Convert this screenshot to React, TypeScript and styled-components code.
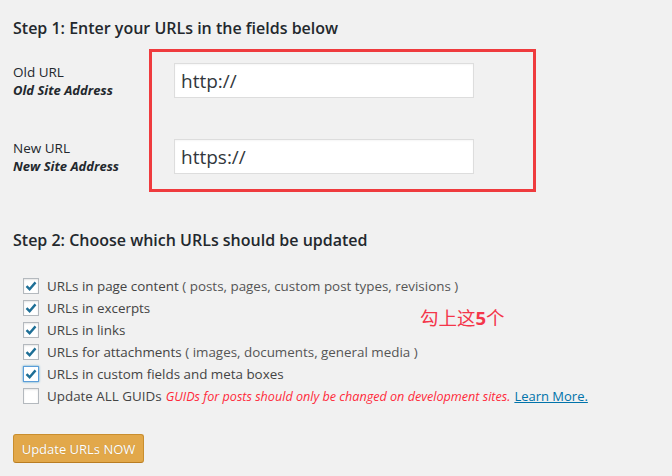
import styled, { createGlobalStyle } from "styled-components";

const GlobalStyle = createGlobalStyle`
  html, body {
    margin: 0;
    padding: 0;
    background: #f1f1f1;
  }
  body {
    font-family: "Open Sans", "Noto Sans", Arial, sans-serif;
    font-size: 13px;
    color: #444;
  }
`;

const Page = styled.div`
  position: relative;
  padding: 16px 13px 0 13px;
  width: 672px;
  height: 476px;
  box-sizing: border-box;
`;

const Heading = styled.h3`
  margin: 0;
  font-size: 16px;
  font-weight: 600;
  color: #23282d;
  line-height: 24px;
`;

const Fields = styled.div`
  display: flex;
  margin-top: 9px;
`;

const LabelColumn = styled.div`
  width: 136px;
  display: flex;
  flex-direction: column;
  gap: 41px;
  padding-top: 14px;
`;

const FieldLabel = styled.div`
  height: 35px;
  line-height: 18px;
  font-size: 13.5px;
  color: #23282d;
  strong {
    display: block;
    font-size: 13px;
    font-style: italic;
    font-weight: 700;
  }
`;

const Frame = styled.div`
  width: 387px;
  box-sizing: border-box;
  border: 3px solid #ef3b3e;
  padding: 11px 22px 15px;
  display: flex;
  flex-direction: column;
  gap: 41px;
`;

const UrlInput = styled.input`
  width: 300px;
  height: 35px;
  box-sizing: border-box;
  border: 1px solid #ddd;
  background: #fff;
  padding: 0 6px;
  font-family: inherit;
  font-size: 19px;
  color: #32373c;
  outline: none;
  box-shadow: inset 0 1px 2px rgba(0, 0, 0, 0.04);
`;

const Step2 = styled(Heading)`
  margin-top: 36px;
`;

const OptionList = styled.div`
  margin-top: 23px;
  padding-left: 10px;
  display: flex;
  flex-direction: column;
`;

const Option = styled.label`
  display: flex;
  align-items: center;
  height: 22px;
  gap: 8px;
  font-size: 13.4px;
  color: #444;
  white-space: nowrap;
`;

const Box = styled.span<{ $focus?: boolean }>`
  width: 16px;
  height: 16px;
  box-sizing: border-box;
  background: #fff;
  border: 1px solid ${(p) => (p.$focus ? "#5b9dd9" : "#b4b9be")};
  box-shadow: ${(p) =>
    p.$focus ? "0 0 2px rgba(30,140,190,0.8)" : "inset 0 1px 2px rgba(0,0,0,0.1)"};
  display: flex;
  align-items: center;
  justify-content: center;
  flex-shrink: 0;
`;

const Note = styled.span`
  color: #555;
`;

const Warning = styled.em`
  color: #ff2a3a;
  margin-left: 4px;
  font-size: 12.6px;
`;

const MoreLink = styled.a`
  color: #0073aa;
  text-decoration: underline;
  margin-left: 4px;
  font-size: 13px;
`;

const Annotation = styled.div`
  position: absolute;
  left: 420px;
  top: 304px;
  font-family: "Noto Sans CJK SC", "Noto Sans", sans-serif;
  font-size: 18.5px;
  color: #f4364a;
  b {
    font-family: "Open Sans", sans-serif;
    font-weight: 700;
  }
`;

const SubmitButton = styled.button`
  margin-top: 27px;
  width: 131px;
  height: 29px;
  box-sizing: border-box;
  background: #e2a84a;
  border: 1px solid #c98e2e;
  border-bottom-color: #b97d22;
  border-radius: 3px;
  color: #fff;
  font-family: inherit;
  font-size: 13px;
  text-shadow: 0 0 1px rgba(0, 0, 0, 0.2);
  padding: 0;
  cursor: pointer;
`;

function Check() {
  return (
    <svg width="14" height="14" viewBox="0 0 14 14">
      <path d="M2.5 7.2 L5.6 10.2 L11.5 3.4" fill="none" stroke="#1e6f96" strokeWidth="2.4" />
    </svg>
  );
}

type Item = { label: string; note?: string; checked: boolean; focus?: boolean };

const items: Item[] = [
  { label: "URLs in page content", note: "( posts, pages, custom post types, revisions )", checked: true },
  { label: "URLs in excerpts", checked: true },
  { label: "URLs in links", checked: true },
  { label: "URLs for attachments", note: "( images, documents, general media )", checked: true },
  { label: "URLs in custom fields and meta boxes", checked: true, focus: true },
];

export default function App() {
  return (
    <>
      <GlobalStyle />
      <Page>
        <Heading>Step 1: Enter your URLs in the fields below</Heading>
        <Fields>
          <LabelColumn>
            <FieldLabel>
              Old URL
              <strong>Old Site Address</strong>
            </FieldLabel>
            <FieldLabel>
              New URL
              <strong>New Site Address</strong>
            </FieldLabel>
          </LabelColumn>
          <Frame>
            <UrlInput defaultValue="http://" />
            <UrlInput defaultValue="https://" />
          </Frame>
        </Fields>

        <Step2>Step 2: Choose which URLs should be updated</Step2>
        <OptionList>
          {items.map((it) => (
            <Option key={it.label}>
              <Box $focus={it.focus}>{it.checked && <Check />}</Box>
              <span>
                {it.label}
                {it.note && <Note> {it.note}</Note>}
              </span>
            </Option>
          ))}
          <Option>
            <Box />
            <span>
              Update ALL GUIDs
              <Warning>GUIDs for posts should only be changed on development sites.</Warning>
              <MoreLink href="#">Learn More.</MoreLink>
            </span>
          </Option>
        </OptionList>
        <Annotation>
          勾上这<b>5</b>个
        </Annotation>
        <SubmitButton>Update URLs NOW</SubmitButton>
      </Page>
    </>
  );
}
